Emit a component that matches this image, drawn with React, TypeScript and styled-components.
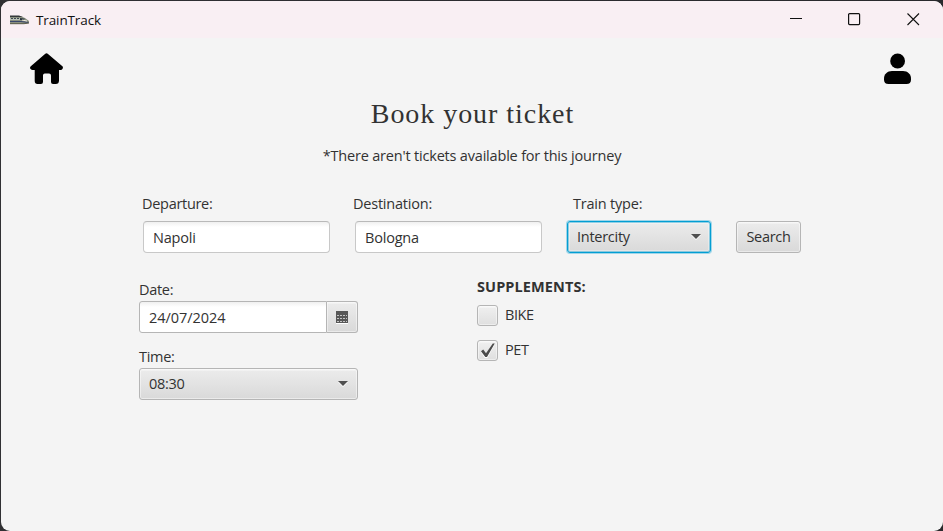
import React from 'react';
import styled, { createGlobalStyle, css } from 'styled-components';

const GlobalStyle = createGlobalStyle`
  html, body { margin: 0; background: #28282b; overflow: hidden; }
  * { box-sizing: border-box; }
  button, input { font: inherit; color: inherit; margin: 0; }
`;

const Backdrop = styled.div`
  height: 531px;
  padding: 1px 0 0 1px;
  background: linear-gradient(90deg, #303033, #29292c);
`;

const Window = styled.div`
  height: 530px;
  display: flex;
  flex-direction: column;
  overflow: hidden;
  border-radius: 9px;
  background: #f4f4f4;
  color: #323232;
  font: 14.5px/20px 'Open Sans', 'Noto Sans', sans-serif;
`;

const TitleBar = styled.header`
  height: 37px;
  flex: none;
  display: flex;
  align-items: center;
  padding: 0 23px 0 8px;
  background: #f9eff3;
  color: #111;
`;

const AppName = styled.span`
  flex: 1;
  margin-left: 6px;
  font-size: 13.5px;
  letter-spacing: -0.12px;
`;

const WindowControls = styled.div`
  display: flex;
  gap: 45px;
  svg { display: block; }
  svg:last-child { margin-left: 1px; }
`;

const NavBar = styled.nav`
  height: 63px;
  flex: none;
  display: flex;
  justify-content: space-between;
  padding: 15px 32px 0 28px;
  color: #000;
  svg { display: block; }
`;

const Heading = styled.h1`
  margin: -4px 0 0 1px;
  text-align: center;
  font: 400 28px/34px 'Liberation Serif', serif;
  letter-spacing: 0.95px;
`;

const Notice = styled.p`
  margin: 15px 0 0;
  text-align: center;
  letter-spacing: -0.19px;
`;

const SearchRow = styled.form`
  display: flex;
  align-items: flex-end;
  margin: 28px 0 0 141px;
`;

const Field = styled.div<{ $gap?: number }>`
  display: flex;
  flex-direction: column;
  margin-left: ${p => p.$gap ?? 0}px;
`;

const Label = styled.label<{ $indent?: number; $track?: number }>`
  height: 20px;
  padding-left: ${p => p.$indent ?? 0}px;
  letter-spacing: ${p => p.$track ?? -0.3}px;
  white-space: nowrap;
`;

const raised = css`
  border: 1px solid #b5b5b5;
  border-radius: 3px;
  background: linear-gradient(#ececec, #d9d9d9);
  box-shadow: inset 0 0 0 1px rgba(255, 255, 255, 0.45), inset 0 2px 0 rgba(255, 255, 255, 0.3);
`;

const TextInput = styled.input<{ $indent: number }>`
  width: 187px;
  height: 32px;
  margin: 7px 0 0 ${p => p.$indent}px;
  padding: 1px 9px 0;
  border: 1px solid #c8c8c8;
  border-top-color: #b9b9b9;
  border-radius: 4px;
  outline: 0;
  background: linear-gradient(#f0f0f0, #fff 5px);
  letter-spacing: -0.2px;
`;

const Combo = styled.button<{ $width: number; $focused?: boolean; $top?: number }>`
  ${raised}
  width: ${p => p.$width}px;
  height: 32px;
  margin-top: ${p => p.$top ?? 1}px;
  padding: 0 9px;
  display: flex;
  align-items: center;
  justify-content: space-between;
  letter-spacing: -0.27px;
  ${p => p.$focused && css`
    border-color: #039ed3;
    box-shadow: 0 0 0 1px rgba(3, 158, 211, 0.35), inset 0 0 0 1px rgba(3, 158, 211, 0.4), inset 0 0 0 2px rgba(255, 255, 255, 0.3);
  `}
`;

const SearchButton = styled.button`
  ${raised}
  width: 65px;
  height: 32px;
  margin-left: 25px;
  padding: 0;
  letter-spacing: -0.3px;
`;

const Details = styled.div`
  display: flex;
  margin: 24px 0 0 138px;
`;

const Schedule = styled.section`
  width: 338px;
  display: flex;
  flex-direction: column;
  padding-top: 3px;
  gap: 14px;
`;

const DatePicker = styled.div`
  display: flex;
  width: 219px;
  height: 32px;
  margin-top: 1px;
`;

const DateInput = styled.input`
  width: 188px;
  padding: 2px 9px 0;
  border: 1px solid #b5b5b5;
  border-radius: 3px 0 0 3px;
  outline: 0;
  background: linear-gradient(#f0f0f0, #fff 5px);
  letter-spacing: -0.05px;
`;

const CalendarButton = styled.button`
  ${raised}
  flex: 1;
  display: flex;
  align-items: center;
  justify-content: center;
  border-left: 0;
  border-radius: 0 3px 3px 0;
  padding: 1px 0 0;
`;

const Supplements = styled.section`
  display: flex;
  flex-direction: column;
`;

const SectionTitle = styled.h2`
  margin: 0 0 8px;
  font-size: 14.5px;
  line-height: 20px;
  letter-spacing: 0.1px;
`;

const Option = styled.label<{ $track: number }>`
  height: 21px;
  display: flex;
  gap: 7px;
  margin-bottom: 14px;
  line-height: 19px;
  letter-spacing: ${p => p.$track}px;
`;

const CheckBox = styled.span`
  ${raised}
  width: 21px;
  height: 21px;
  background: linear-gradient(#f0f0f0, #dfdfdf);
  svg { display: block; margin: 2px 0 0 3px; }
`;

const TrainLogo = () => (
  <svg width="21" height="12" viewBox="0 0 21 12">
    <path d="M1 2H11L16 4 20 7V9L15 10H1Z" fill="#8a9080" />
    <path d="M1 1.5H10L14 3H1Z" fill="#35383a" />
    <path d="M1 4H12V6H1Z" fill="#b9c0b6" />
    <path d="M2 4.5H4M5 4.5H7M8 4.5H10" stroke="#3c4650" />
    <path d="M11 4L16 4.8 14 6H11Z" fill="#27323c" />
    <path d="M1 7.5H12L19.5 8.5" stroke="#39476b" strokeWidth="1.2" fill="none" />
    <path d="M1 9.7H15L20 9" stroke="#5d5e4b" fill="none" />
    <path d="M13 6L18 7" stroke="#eee9dc" />
  </svg>
);

const HomeIcon = () => (
  <svg width="35" height="31" viewBox="0 0 35 31">
    <path d="M16 .9Q17.5-.2 19 .9L33.4 13.2Q34.4 14.2 33.6 15.8 33 17 31.5 17H30V27.5Q30 31 26.7 31H24Q22 31 22 29V22.5Q22 20.5 20 20.5H15.8Q14 20.5 14 22.5V29Q14 31 12 31H8.6Q5.7 31 5.7 28V17H3.5Q1.8 17 1.2 15.6.7 14.2 1.8 13.2Z" fill="currentColor" />
  </svg>
);

const UserIcon = () => (
  <svg width="27" height="31" viewBox="0 0 27 31">
    <circle cx="13.6" cy="8" r="7.4" fill="currentColor" />
    <path d="M8 18H19C23.7 18 27 21.3 27 25.4V26.5Q27 31 22.5 31H4.5Q0 31 0 26.5V25.4C0 21.3 3.3 18 8 18Z" fill="currentColor" />
  </svg>
);

const Arrow = () => (
  <svg width="10" height="6" viewBox="0 0 10 6">
    <path d="M0 1H10L5 6Z" fill="#fff" />
    <path d="M0 0H10L5 5Z" fill="#505050" />
  </svg>
);

const CalendarIcon = () => (
  <svg width="12" height="13" viewBox="0 0 12 13" shapeRendering="crispEdges">
    <path d="M0 12H12V13H0Z" fill="#fff" />
    <path d="M0 0H12V12H0Z" fill="#575757" />
    <path d="M1 4.5h2M4 4.5h2M7 4.5h2M10 4.5h1M1 7.5h2M4 7.5h2M7 7.5h2M10 7.5h1M1 10.5h2M4 10.5h2M7 10.5h2M10 10.5h1" stroke="#c4c4c4" />
  </svg>
);

const CheckMark = () => (
  <svg width="14" height="15" viewBox="0 0 14 15">
    <path d="M0 8.5L2.2 6.8 5 10.3 11.8.7H13.7L6 15H4.3Z" fill="#fff" transform="translate(0 .7)" />
    <path d="M0 8.3L2.2 6.6 5 10.3 11.8.5H13.7L6 14H4.3Z" fill="#4b4b4b" />
  </svg>
);

export default function App() {
  return (
    <>
      <GlobalStyle />
      <Backdrop>
        <Window>
          <TitleBar>
            <TrainLogo />
            <AppName>TrainTrack</AppName>
            <WindowControls>
              <svg width="13" height="13" viewBox="0 0 13 13"><path d="M0 5.5H12" stroke="#111" /></svg>
              <svg width="13" height="13" viewBox="0 0 13 13"><rect x=".6" y=".6" width="11" height="11" rx="1" fill="none" stroke="#111" strokeWidth="1.2" /></svg>
              <svg width="13" height="13" viewBox="0 0 13 13"><path d="M.5.5L12 12M12 .5L.5 12" stroke="#111" strokeWidth="1.1" /></svg>
            </WindowControls>
          </TitleBar>
          <NavBar>
            <HomeIcon />
            <UserIcon />
          </NavBar>
          <Heading>Book your ticket</Heading>
          <Notice>*There aren't tickets available for this journey</Notice>
          <SearchRow onSubmit={e => e.preventDefault()}>
            <Field>
              <Label>Departure:</Label>
              <TextInput $indent={1} defaultValue="Napoli" />
            </Field>
            <Field $gap={23}>
              <Label $track={-0.22}>Destination:</Label>
              <TextInput $indent={2} defaultValue="Bologna" />
            </Field>
            <Field $gap={25}>
              <Label $indent={6} $track={-0.2}>Train type:</Label>
              <Combo type="button" $width={144} $top={7} $focused>Intercity<Arrow /></Combo>
            </Field>
            <SearchButton>Search</SearchButton>
          </SearchRow>
          <Details>
            <Schedule>
              <Field>
                <Label>Date:</Label>
                <DatePicker>
                  <DateInput defaultValue="24/07/2024" />
                  <CalendarButton type="button"><CalendarIcon /></CalendarButton>
                </DatePicker>
              </Field>
              <Field>
                <Label>Time:</Label>
                <Combo type="button" $width={219}>08:30<Arrow /></Combo>
              </Field>
            </Schedule>
            <Supplements>
              <SectionTitle>SUPPLEMENTS:</SectionTitle>
              <Option $track={-0.4}><CheckBox />BIKE</Option>
              <Option $track={-0.4}><CheckBox><CheckMark /></CheckBox>PET</Option>
            </Supplements>
          </Details>
        </Window>
      </Backdrop>
    </>
  );
}
